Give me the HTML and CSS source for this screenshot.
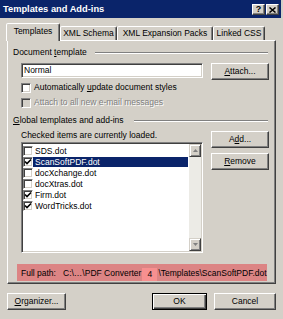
FILE: index.html
```html
<!DOCTYPE html>
<html>
<head>
<meta charset="utf-8">
<link rel="stylesheet" href="styles.css">
</head>
<body>
<div class="win">
  <div class="title">
    <span class="title-text">Templates and Add-ins</span>
    <div class="caps">
      <span class="cap help">?</span>
      <span class="cap"><svg width="7" height="6" viewBox="0 0 7 6"><path d="M0.5 0.5 L6.5 5.5 M6.5 0.5 L0.5 5.5" stroke="#000" stroke-width="1.5"/></svg></span>
    </div>
  </div>
  <div class="tabs">
    <div class="tab sel t1">Templates</div>
    <div class="tab t2">XML Schema</div>
    <div class="tab t3">XML Expansion Packs</div>
    <div class="tab t4">Linked CSS</div>
  </div>
  <div class="panel">
    <div class="heading"><span>Document <u>t</u>emplate</span><i class="line"></i></div>
    <div class="row1">
      <div class="input">Normal</div>
      <div class="btn attach"><span><u>A</u>ttach...</span></div>
    </div>
    <div class="chk c1"><span class="box"></span><span>Automatically <u>u</u>pdate document styles</span></div>
    <div class="chk c2 dis"><span class="box"></span><span>Attach to all new e-mail messages</span></div>
    <div class="heading h2"><span><u>G</u>lobal templates and add-ins</span><i class="line"></i></div>
    <div class="row2">
      <div class="leftcol">
        <div class="note">Checked items are currently loaded.</div>
        <div class="list">
          <div class="items">
            <div class="item"><span class="box"></span><span class="lbl">SDS.dot</span></div>
            <div class="item"><span class="box on"><svg width="8" height="8" viewBox="0 0 8 8"><path d="M1 3.5 L3 5.5 L7 1.5" fill="none" stroke="#000" stroke-width="1.6"/></svg></span><span class="lbl selected">ScanSoftPDF.dot</span></div>
            <div class="item"><span class="box"></span><span class="lbl">docXchange.dot</span></div>
            <div class="item"><span class="box"></span><span class="lbl">docXtras.dot</span></div>
            <div class="item"><span class="box on"><svg width="8" height="8" viewBox="0 0 8 8"><path d="M1 3.5 L3 5.5 L7 1.5" fill="none" stroke="#000" stroke-width="1.6"/></svg></span><span class="lbl">Firm.dot</span></div>
            <div class="item"><span class="box on"><svg width="8" height="8" viewBox="0 0 8 8"><path d="M1 3.5 L3 5.5 L7 1.5" fill="none" stroke="#000" stroke-width="1.6"/></svg></span><span class="lbl">WordTricks.dot</span></div>
          </div>
          <div class="sb">
            <div class="sbtn"><svg width="5" height="3" viewBox="0 0 5 3"><path d="M2.5 0 L5 3 L0 3 Z" fill="#808080"/></svg></div>
            <div class="track"></div>
            <div class="sbtn"><svg width="5" height="3" viewBox="0 0 5 3"><path d="M0 0 L5 0 L2.5 3 Z" fill="#808080"/></svg></div>
          </div>
        </div>
      </div>
      <div class="rightcol">
        <div class="btn add"><span>A<u>d</u>d...</span></div>
        <div class="btn remove"><span><u>R</u>emove</span></div>
      </div>
    </div>
    <div class="path"><span class="plabel">Full path:</span><span>C:\…\PDF Converter</span><span class="hl">4</span><span>\Templates\ScanSoftPDF.dot</span></div>
  </div>
  <div class="foot">
    <div class="btn org"><span><u>O</u>rganizer...</span></div>
    <div class="right">
      <div class="btn def ok"><span>OK</span></div>
      <div class="btn cancel"><span>Cancel</span></div>
    </div>
  </div>
</div>
</body>
</html>
```
FILE: styles.css
```css
* { box-sizing: border-box; margin: 0; padding: 0; }
html, body { width: 283px; height: 319px; overflow: hidden; }
body {
  background: #d4d0c8;
  font-family: "Liberation Sans", Arial, sans-serif;
  font-size: 8.5px;
  line-height: 11px;
  color: #000;
}
u { text-decoration: underline; text-underline-offset: 1px; }
.win { width: 283px; height: 319px; display: flex; flex-direction: column; }

.title {
  height: 18px;
  margin-right: 2px;
  background: #0a246a;
  color: #fff;
  display: flex;
  align-items: center;
  justify-content: space-between;
  padding: 0 2px 0 3px;
}
.title-text { font-weight: bold; font-size: 9.3px; }
.caps { display: flex; gap: 1px; margin-top: 1px; }
.cap {
  width: 13px; height: 11px;
  background: #d4d0c8;
  border: 1px solid;
  border-color: #fff #404040 #404040 #fff;
  box-shadow: inset -1px -1px #808080;
  display: flex; align-items: center; justify-content: center;
  color: #000;
}
.cap.help { font-weight: bold; font-size: 9px; line-height: 9px; }

.tabs {
  display: flex;
  align-items: flex-end;
  height: 18px;
  margin: 5px 0 -1px 6px;
  position: relative;
  z-index: 1;
}
.tab {
  height: 14px;
  margin-bottom: 1px;
  border: 1px solid;
  border-bottom: none;
  border-color: #fff #404040 transparent #fff;
  border-radius: 2px 2px 0 0;
  box-shadow: inset -1px 0 #808080;
  display: flex; align-items: center; justify-content: center;
  background: #d4d0c8;
  white-space: nowrap;
}
.tab.sel { height: 18px; margin-bottom: 0; padding-bottom: 2px; }
.t1 { width: 54px; }
.t2 { width: 57px; }
.t3 { width: 96px; }
.t4 { width: 52px; }

.panel {
  margin-left: 7px;
  width: 269px;
  height: 244px;
  border: 1px solid;
  border-color: #fff #404040 #404040 #fff;
  box-shadow: inset -1px -1px #808080;
  padding: 6px 0 0 5px;
  display: flex;
  flex-direction: column;
}
.heading { display: flex; align-items: center; height: 11px; }
.heading .line {
  flex: 1;
  height: 2px;
  margin: 0 7px 0 8px;
  border-top: 1px solid #808080;
  border-bottom: 1px solid #fff;
}
.heading.h2 { margin-top: 7px; }
.heading.h2 .line { margin-left: 10px; }

.row1 { display: flex; margin: 5px 0 0 8px; }
.input {
  width: 182px; height: 15px;
  background: #fff;
  border: 1px solid;
  border-color: #808080 #fff #fff #808080;
  box-shadow: inset 1px 1px #404040, inset -1px -1px #d4d0c8;
  padding: 1px 0 0 2px;
  line-height: 11px;
}
.btn {
  height: 17px;
  border: 1px solid;
  border-color: #fff #404040 #404040 #fff;
  box-shadow: inset -1px -1px #808080;
  display: flex; align-items: center; justify-content: center;
  background: #d4d0c8;
}
.attach { width: 58px; margin-left: 8px; }

.chk { display: flex; align-items: center; height: 11px; margin-left: 8px; gap: 3px; }
.chk.c1 { margin-top: 2px; }
.chk.c2 { margin-top: 4px; }
.box {
  width: 10px; height: 10px;
  flex: none;
  background: #fff;
  border: 1px solid;
  border-color: #808080 #fff #fff #808080;
  box-shadow: inset 1px 1px #404040, inset -1px -1px #d4d0c8;
  display: flex; align-items: center; justify-content: center;
}
.dis { color: #808080; text-shadow: 1px 1px 0 #fff; }
.dis .box { background: #d4d0c8; }

.row2 { display: flex; margin: 4px 0 0 8px; }
.leftcol { width: 182px; display: flex; flex-direction: column; }
.note { height: 11px; }
.list {
  margin-top: 1px;
  height: 111px;
  background: #fff;
  border: 1px solid;
  border-color: #808080 #fff #fff #808080;
  box-shadow: inset 1px 1px #404040, inset -1px -1px #d4d0c8;
  padding: 1px 1px 1px 1px;
  display: flex;
}
.items { flex: 1; padding: 1px 1px 0 0; display: flex; flex-direction: column; }
.item { height: 11px; display: flex; align-items: center; }
.item .box { margin-left: 0; }
.lbl { line-height: 10px; height: 10px; padding: 0 2px; }
.lbl.selected { flex: 1; background: #0a246a; color: #fff; }
.sb { width: 12px; display: flex; flex-direction: column; }
.sbtn {
  height: 13px;
  background: #d4d0c8;
  border: 1px solid;
  border-color: #d4d0c8 #404040 #404040 #d4d0c8;
  box-shadow: inset 1px 1px #fff, inset -1px -1px #808080;
  display: flex; align-items: center; justify-content: center;
}
.track { flex: 1; background: #ecebe6; }

.rightcol { display: flex; flex-direction: column; margin-left: 8px; }
.add { width: 58px; margin-top: 1px; }
.remove { width: 58px; margin-top: 5px; }

.path {
  margin: 11px 0 0 4px;
  width: 250px;
  height: 17px;
  background: #dc8484;
  display: flex;
  align-items: center;
  padding: 2px 0 0 4px;
  white-space: nowrap;
}
.plabel { width: 42px; }
.hl {
  background: #f79090;
  width: 15px;
  height: 13px;
  margin: 2px 1px 0 1px;
  display: flex; align-items: center; justify-content: center;
}

.foot { display: flex; margin-top: 9px; padding: 0 7px; }
.org { width: 59px; }
.right { margin-left: auto; display: flex; gap: 7px; }
.ok { width: 55px; }
.cancel { width: 62px; }
.btn.def {
  border: 1px solid #000;
  box-shadow: inset 1px 1px #fff, inset -1px -1px #404040, inset -2px -2px #808080;
}
```
